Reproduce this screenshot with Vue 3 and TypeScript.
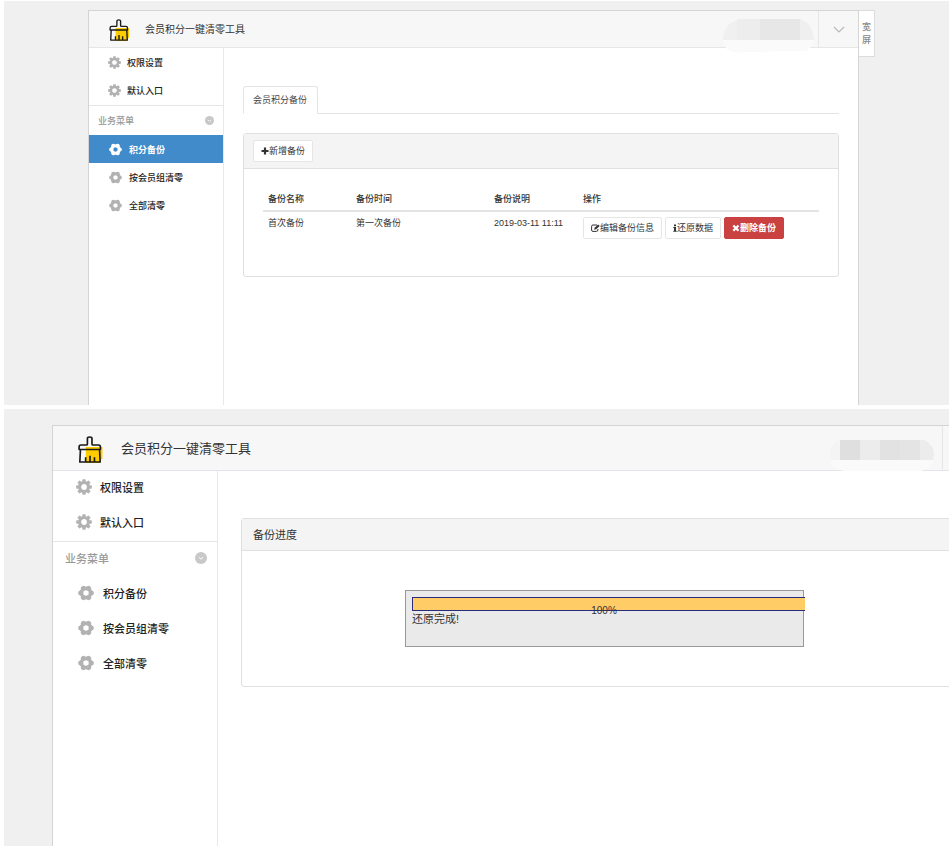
<script setup lang="ts">
interface MenuItem {
  label: string
  active?: boolean
}

interface Backup {
  name: string
  time: string
  note: string
}

const title = '会员积分一键清零工具'
const systemMenu: string[] = ['权限设置', '默认入口']
const backupMenu: MenuItem[] = [
  { label: '积分备份', active: true },
  { label: '按会员组清零' },
  { label: '全部清零' },
]
const progressMenu: MenuItem[] = backupMenu.map(({ label }) => ({ label }))
const columns: string[] = ['备份名称', '备份时间', '备份说明', '操作']
const backups: Backup[] = [{ name: '首次备份', time: '第一次备份', note: '2019-03-11 11:11' }]
const progress = 100
const toothAngles = [0, 45, 90, 135, 180, 225, 270, 315]
const lobeAngles = [0, 60, 120, 180, 240, 300]
</script>

<template>
  <svg class="symbols" aria-hidden="true">
    <defs>
      <symbol id="brush" viewBox="0 0 24 26">
        <path d="M8 10.500h16v11.500l-2 1V26H8z" fill="#fc0" />
        <path d="M1.500 13V10.500q0-1.800 1.800-1.800H8.500q1 0 1-1V2.500q0-1.500 2.200-1.500t2.200 1.500V7.700q0 1 1 1h5.300q1.800 0 1.800 1.800V13zM2.800 13L2.200 25H21.800L21.200 13M7.800 25v-4.500M12 25v-6M16.300 25v-4.500" fill="none" stroke="#1a1a1a" stroke-width="1.600" stroke-linejoin="round" />
      </symbol>
      <symbol id="cog" viewBox="0 0 16 16">
        <circle cx="8" cy="8" r="4.400" fill="none" stroke="currentColor" stroke-width="3" />
        <rect v-for="a in toothAngles" :key="a" x="6.300" y="0.200" width="3.400" height="3.200" rx="0.700" fill="currentColor" :transform="`rotate(${a} 8 8)`" />
      </symbol>
      <symbol id="flower" viewBox="0 0 16 16">
        <circle cx="8" cy="8" r="4.600" fill="none" stroke="currentColor" stroke-width="3.600" />
        <circle v-for="a in lobeAngles" :key="a" cx="13.300" cy="8" r="2.500" fill="currentColor" :transform="`rotate(${a} 8 8)`" />
      </symbol>
      <symbol id="fold" viewBox="0 0 12 12">
        <circle cx="6" cy="6" r="6" fill="#c8c8c8" />
        <path d="M3.800 5.200L6 7.200l2.200-2" fill="none" stroke="#fff" />
      </symbol>
    </defs>
  </svg>

  <div class="page">
    <section class="shot shot-list">
      <div class="app">
        <header class="bar">
          <svg class="logo"><use href="#brush" /></svg>
          <h1>{{ title }}</h1>
          <svg class="account" viewBox="0 0 91 34" aria-hidden="true">
            <path d="M0 21h91q-2 9-10 11l-60 1q-19 3-21-12z" fill="#fafafa" />
            <path d="M0 21Q1 3 16 1V21z" fill="#f0f0f0" />
            <path d="M14 0h23v21H14z" fill="#ededed" />
            <path d="M37 0h40v21H37z" fill="#e7e7e7" />
            <path d="M77 0Q90 4 91 21H77z" fill="#efefef" />
          </svg>
          <button class="drop" type="button" aria-label="展开">
            <svg viewBox="0 0 12 8"><path d="M1 1l5 5 5-5" fill="none" stroke="#b8b8b8" stroke-width="1.200" /></svg>
          </button>
        </header>
        <div class="body">
          <nav class="side">
            <a v-for="label in systemMenu" :key="label" class="item" href="#">
              <svg class="icon"><use href="#cog" /></svg>{{ label }}
            </a>
            <div class="group">业务菜单<svg class="fold"><use href="#fold" /></svg></div>
            <a v-for="m in backupMenu" :key="m.label" class="item sub" :class="{ active: m.active }" href="#">
              <svg class="icon"><use href="#flower" /></svg>{{ m.label }}
            </a>
          </nav>
          <main class="main">
            <div class="tabs"><a class="tab" href="#">会员积分备份</a></div>
            <div class="panel">
              <div class="panel-head">
                <button class="btn" type="button">
                  <svg class="glyph" viewBox="0 0 8 8"><path d="M4 0.500v7M0.500 4h7" stroke="currentColor" stroke-width="2.200" /></svg>新增备份
                </button>
              </div>
              <div class="panel-body">
                <table>
                  <thead>
                    <tr><th v-for="c in columns" :key="c" scope="col">{{ c }}</th></tr>
                  </thead>
                  <tbody>
                    <tr v-for="b in backups" :key="b.name">
                      <td>{{ b.name }}</td>
                      <td>{{ b.time }}</td>
                      <td>{{ b.note }}</td>
                      <td>
                        <div class="actions">
                          <button class="btn" type="button">
                            <svg class="glyph edit" viewBox="0 0 9 8"><path d="M6 1H2Q0.600 1 0.600 2.300V6Q0.600 7.400 2 7.400H5.500Q6.900 7.400 6.900 6V5" fill="none" stroke="currentColor" /><path d="M3.200 5.700l0.400-1.900L7.200 0.400l1.500 1.500L5.200 5.300z" fill="currentColor" /></svg>编辑备份信息
                          </button>
                          <button class="btn" type="button">
                            <svg class="glyph info" viewBox="0 0 4 8"><path d="M1 0.500h2v1.700H1zM0.300 3H3v3.700h0.700V7.800H0.300V6.700H1V4.100H0.300z" fill="currentColor" /></svg>还原数据
                          </button>
                          <button class="btn danger" type="button">
                            <svg class="glyph" viewBox="0 0 8 8"><path d="M1.300 1.500l5.200 5.200M6.500 1.500L1.300 6.700" stroke="currentColor" stroke-width="2.200" /></svg>删除备份
                          </button>
                        </div>
                      </td>
                    </tr>
                  </tbody>
                </table>
              </div>
            </div>
          </main>
        </div>
      </div>
      <button class="wide" type="button">宽屏</button>
    </section>

    <section class="shot shot-progress">
      <div class="app">
        <header class="bar">
          <svg class="logo"><use href="#brush" /></svg>
          <h1>{{ title }}</h1>
          <svg class="account" viewBox="0 0 104 32" aria-hidden="true">
            <path d="M0 21h104q-4 9-13 11H14Q2 30 0 21z" fill="#fafafa" />
            <path d="M0 21V14Q2 3 10 1V21z" fill="#f4f4f4" />
            <path d="M10 1h20v20H10z" fill="#dfdfdf" />
            <path d="M30 1h20v20H30z" fill="#ececec" />
            <path d="M50 1h20v20H50z" fill="#e2e2e2" />
            <path d="M70 1h20v20H70z" fill="#e4e4e4" />
            <path d="M90 1h5q9 6 9 14l-1 6H90z" fill="#ececec" />
          </svg>
          <span class="drop"></span>
        </header>
        <div class="body">
          <nav class="side">
            <a v-for="label in systemMenu" :key="label" class="item" href="#">
              <svg class="icon"><use href="#cog" /></svg>{{ label }}
            </a>
            <div class="group">业务菜单<svg class="fold"><use href="#fold" /></svg></div>
            <a v-for="m in progressMenu" :key="m.label" class="item sub" href="#">
              <svg class="icon"><use href="#flower" /></svg>{{ m.label }}
            </a>
          </nav>
          <main class="main">
            <div class="panel">
              <div class="panel-head">备份进度</div>
              <div class="panel-body">
                <div class="progress-box">
                  <div class="track" role="progressbar" aria-label="备份进度" aria-valuemin="0" aria-valuemax="100" :aria-valuenow="progress">
                    <div class="fill" :style="{ width: progress + '%' }"></div>
                    <span class="percent">{{ progress }}%</span>
                  </div>
                  <p>还原完成!</p>
                </div>
              </div>
            </div>
          </main>
        </div>
      </div>
    </section>
  </div>
</template>

<style>
body {
  background: #fff;
}
</style>

<style scoped>
* {
  box-sizing: border-box;
}

.symbols {
  position: absolute;
  width: 0;
  height: 0;
}

.page {
  display: flex;
  flex-direction: column;
  gap: 4px;
  padding: 1px 3px 10px 4px;
  font-family: "Liberation Sans", "Noto Sans CJK SC", sans-serif;
  color: #333;
}

.shot {
  display: flex;
  align-items: flex-start;
  background: #f0f0f0;
  overflow: hidden;
}

.shot-list {
  min-height: 404px;
  padding: 9px 74px 0 84px;
  font-size: 9px;
}

.shot-progress {
  min-height: 437px;
  padding: 16px 0 0 48px;
  font-size: 11px;
}

.app {
  display: flex;
  flex: 1;
  flex-direction: column;
  align-self: stretch;
  min-width: 0;
  border: 1px solid #d4d4d4;
  border-bottom: 0;
  background: #fff;
}

.shot-progress .app {
  border-right: 0;
}

.bar {
  display: flex;
  flex: none;
  align-items: center;
  height: 37px;
  padding-left: 19px;
  border-bottom: 1px solid #e6e6e6;
  background: #f7f7f7;
}

.shot-progress .bar {
  height: 45px;
  padding-left: 24px;
  border-color: #e4e4ea;
}

.logo {
  width: 22px;
  height: 22px;
  margin-top: 2px;
}

h1 {
  flex: 1;
  margin: 0 0 0 15px;
  padding-bottom: 2px;
  font-size: 10px;
  font-weight: 400;
}

.shot-progress .logo {
  width: 26px;
  height: 27px;
}

.shot-progress h1 {
  margin-left: 18px;
  font-size: 13px;
}

.account {
  position: relative;
  align-self: flex-start;
  flex: none;
  width: 91px;
  height: 34px;
  margin: 8px 4px 0 0;
}

.shot-progress .account {
  width: 104px;
  height: 32px;
  margin: 13px 8px 0 0;
}

.drop {
  display: flex;
  align-items: center;
  justify-content: center;
  align-self: stretch;
  width: 40px;
  padding: 2px 0 0;
  border: 0;
  border-left: 1px solid #e6e6e6;
  background: none;
}

.shot-progress .drop {
  width: 7px;
}

.drop svg {
  width: 12px;
  height: 8px;
}

.body {
  display: flex;
  flex: 1;
}

.side {
  flex: none;
  width: 135px;
  border-right: 1px solid #e8e8e8;
}

.shot-progress .side {
  width: 165px;
}

.item {
  display: flex;
  align-items: center;
  gap: 6px;
  height: 28px;
  padding-left: 19px;
  color: #222;
  font-weight: 500;
  text-decoration: none;
}

.item.sub {
  gap: 7px;
  padding-left: 20px;
}

.shot-progress .item {
  gap: 8px;
  height: 35px;
  padding-bottom: 3px;
  padding-left: 23px;
}

.shot-progress .item.sub {
  gap: 9px;
  padding-left: 25px;
}

.item.active {
  background: #428bca;
  color: #fff;
  font-weight: 700;
}

.icon {
  width: 13px;
  height: 13px;
  color: #b2b2b2;
}

.active .icon {
  color: #fff;
}

.shot-progress .icon {
  width: 16px;
  height: 16px;
}

.group {
  display: flex;
  align-items: center;
  justify-content: space-between;
  height: 30px;
  margin-top: 1px;
  padding: 0 9px;
  border-top: 1px solid #e6e6e6;
  color: #999;
  font-weight: 500;
}

.shot-progress .group {
  height: 36px;
  margin-top: 0;
  padding: 0 10px 3px 12px;
}

.fold {
  width: 9px;
  height: 9px;
}

.shot-progress .fold {
  width: 12px;
  height: 12px;
}

.main {
  flex: 1;
  min-width: 0;
  padding: 38px 19px 0;
}

.shot-progress .main {
  padding: 47px 0 0 23px;
}

.tabs {
  display: flex;
  height: 28px;
  margin-bottom: 19px;
  border-bottom: 1px solid #e4e4e4;
}

.tab {
  height: 28px;
  padding: 0 10px 0 9px;
  border: 1px solid #e4e4e4;
  border-bottom-color: #fff;
  border-radius: 3px 3px 0 0;
  background: #fff;
  color: #444;
  line-height: 26px;
  text-decoration: none;
}

.panel {
  border: 1px solid #e0e0e0;
  border-radius: 3px;
}

.panel-head {
  display: flex;
  align-items: center;
  height: 35px;
  padding: 0 9px;
  border-bottom: 1px solid #e0e0e0;
  background: #f4f4f4;
}

.panel-body {
  padding: 19px 19px 32px;
}

.shot-progress .panel {
  margin-right: -19px;
}

.shot-progress .panel-head {
  height: 32px;
  padding: 0 11px 2px;
}

.shot-progress .panel-body {
  padding: 39px 0;
}

table {
  width: 100%;
  border-collapse: separate;
  border-spacing: 0;
  table-layout: fixed;
}

th,
td {
  padding: 5px;
  text-align: left;
  vertical-align: top;
  line-height: 12px;
}

th {
  height: 24px;
  border-bottom: 2px solid #e4e4e4;
  font-weight: 500;
}

th:nth-child(1) {
  width: 88px;
}

th:nth-child(2) {
  width: 138px;
}

th:nth-child(3) {
  width: 89px;
}

.actions {
  display: flex;
  gap: 3px;
  white-space: nowrap;
}

.btn {
  display: flex;
  align-items: center;
  justify-content: center;
  height: 22px;
  padding: 0 7px 1px;
  border: 1px solid #e6e6e6;
  border-radius: 2px;
  background: #fff;
  color: #333;
  font: inherit;
}

.btn.danger {
  border-color: #c94141;
  background: #c94141;
  color: #fff;
  font-weight: 700;
}

.glyph {
  flex: none;
  width: 8px;
  height: 8px;
}

.glyph.edit {
  width: 9px;
}

.glyph.info {
  width: 4px;
}

.wide {
  width: 16px;
  height: 47px;
  padding: 0 2px;
  border: 1px solid #dcdcdc;
  border-left: 0;
  background: #fff;
  color: #888;
  font: inherit;
  font-weight: 500;
  line-height: 13px;
}

.progress-box {
  width: 399px;
  height: 57px;
  margin: 0 auto;
  padding: 6px;
  border: 1px solid #999;
  background: #eaeaea;
}

.track {
  position: relative;
  height: 14px;
  margin-right: -8px;
  border: 1px solid #2c2c7c;
  border-right: 0;
}

.fill {
  height: 100%;
  background: #fc6;
}

.percent {
  position: absolute;
  top: 7px;
  left: 0;
  width: 100%;
  padding-right: 10px;
  font-size: 10px;
  line-height: 12px;
  text-align: center;
}

.progress-box p {
  margin: 0;
  line-height: 16px;
}
</style>
